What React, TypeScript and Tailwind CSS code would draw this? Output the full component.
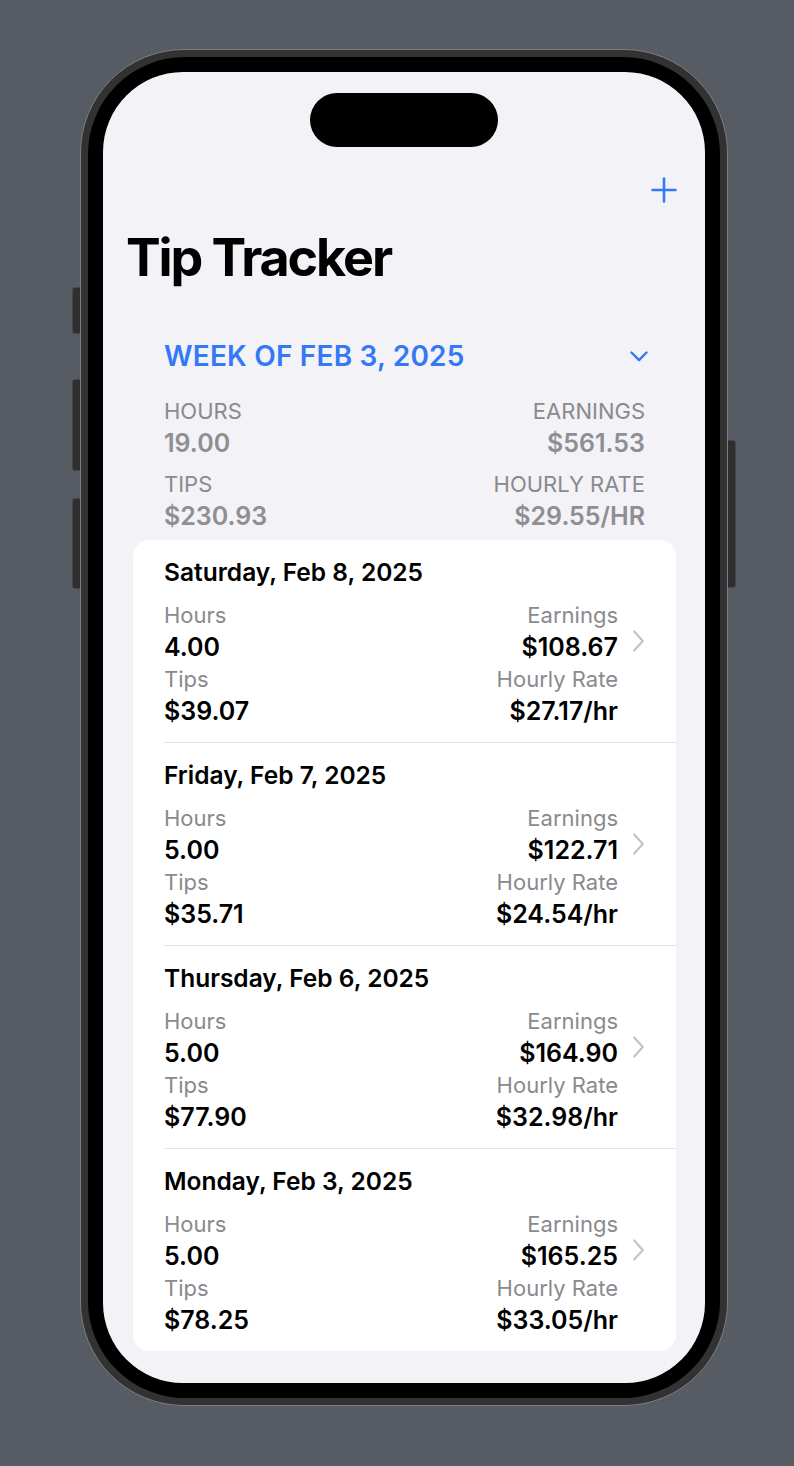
import React from 'react';

const shifts = [
    { date: "Saturday, Feb 8, 2025", hours: "4.00", earnings: "$108.67", tips: "$39.07", rate: "$27.17/hr" },
    { date: "Friday, Feb 7, 2025", hours: "5.00", earnings: "$122.71", tips: "$35.71", rate: "$24.54/hr" },
    { date: "Thursday, Feb 6, 2025", hours: "5.00", earnings: "$164.90", tips: "$77.90", rate: "$32.98/hr" },
    { date: "Monday, Feb 3, 2025", hours: "5.00", earnings: "$165.25", tips: "$78.25", rate: "$33.05/hr" },
];

function ShiftRow({ s, last }: { s: typeof shifts[number]; last: boolean }) {
    return (
        <div className="pl-[31px]">
            <div className={`flex items-center pr-[32px] ${last ? '' : 'border-b border-[#e2e2e7]'}`}>
                <div className="flex-1 pt-[16px] pb-[15px]">
                    <div className="text-[24.5px] leading-[32px] font-semibold text-black">{s.date}</div>
                    <div className="mt-[11px] grid grid-cols-2">
                        <div className="text-[22px] leading-[32px] text-[#8a8a8e]">Hours</div>
                        <div className="text-[22px] leading-[32px] text-[#8a8a8e] text-right">Earnings</div>
                        <div className="text-[25px] leading-[32px] font-semibold text-black">{s.hours}</div>
                        <div className="text-[25px] leading-[32px] font-semibold text-black text-right">{s.earnings}</div>
                        <div className="text-[22px] leading-[32px] text-[#8a8a8e]">Tips</div>
                        <div className="text-[22px] leading-[32px] text-[#8a8a8e] text-right">Hourly Rate</div>
                        <div className="text-[25px] leading-[32px] font-semibold text-black">{s.tips}</div>
                        <div className="text-[25px] leading-[32px] font-semibold text-black text-right">{s.rate}</div>
                    </div>
                </div>
                <svg className="ml-[15px] w-[11px] h-[22px]" viewBox="0 0 11 22" fill="none">
                    <path d="M1.2 1.5 L9.8 11 L1.2 20.5" stroke="#c4c4c7" strokeWidth="2.2" strokeLinecap="round" strokeLinejoin="round" />
                </svg>
            </div>
        </div>
    );
}

export default function App() {
    return (
        <div className="w-[794px] h-[1466px] bg-[#575c64] pt-[49px] pl-[80px]" style={{ fontFamily: 'Inter, "Liberation Sans", sans-serif' }}>
            <div className="relative w-[648px] h-[1357px]">
                {/* hardware buttons */}
                <div className="absolute left-[-8px] top-[238px] w-[9px] h-[47px] rounded-l-[3px] bg-[#2f2f30] border border-[#45474b]" />
                <div className="absolute left-[-8px] top-[330px] w-[9px] h-[92px] rounded-l-[3px] bg-[#2f2f30] border border-[#45474b]" />
                <div className="absolute left-[-8px] top-[449px] w-[9px] h-[91px] rounded-l-[3px] bg-[#2f2f30] border border-[#45474b]" />
                <div className="absolute right-[-8px] top-[391px] w-[9px] h-[148px] rounded-r-[3px] bg-[#2f2f30] border border-[#45474b]" />

                <div className="relative w-full h-full rounded-[104px] bg-[#323233] border border-[#7c7e82] p-[7px]">
                    <div className="w-full h-full rounded-[97px] bg-black p-[15px]">
                        <div className="w-full h-full rounded-[80px] bg-[#f2f2f7] overflow-hidden pt-[21px]">
                            <div className="mx-auto w-[188px] h-[54px] rounded-full bg-black" />

                            <div className="h-[80px] flex justify-end items-start pt-[30px] pr-[28px]">
                                <svg className="w-[26px] h-[26px]" viewBox="0 0 26 26" fill="none">
                                    <path d="M13 1.5 V24.5 M1.5 13 H24.5" stroke="#3478f6" strokeWidth="2.6" strokeLinecap="round" />
                                </svg>
                            </div>

                            <h1 className="pl-[23px] h-[62px] text-[52px] leading-[62px] font-bold tracking-[-2.1px] text-black">Tip Tracker</h1>

                            {/* week summary */}
                            <div className="mt-[51px] pl-[61px] pr-[60px]">
                                <div className="flex items-center justify-between">
                                    <span className="text-[28px] leading-[32px] font-semibold tracking-[0.2px] text-[#3478f6]">WEEK OF FEB 3, 2025</span>
                                    <svg className="w-[18px] h-[11px] -mr-[3px]" viewBox="0 0 18 11" fill="none">
                                        <path d="M1.5 1.5 L9 9.2 L16.5 1.5" stroke="#3478f6" strokeWidth="2.4" strokeLinecap="round" strokeLinejoin="round" />
                                    </svg>
                                </div>
                                <div className="mt-[23px] grid grid-cols-2">
                                    <div className="text-[22px] leading-[32px] text-[#8a8a8e]">HOURS</div>
                                    <div className="text-[22px] leading-[32px] text-[#8a8a8e] text-right">EARNINGS</div>
                                    <div className="text-[25px] leading-[32px] font-semibold text-[#8e8e93]">19.00</div>
                                    <div className="text-[25px] leading-[32px] font-semibold text-[#8e8e93] text-right">$561.53</div>
                                    <div className="mt-[9px] text-[22px] leading-[32px] text-[#8a8a8e]">TIPS</div>
                                    <div className="mt-[9px] text-[22px] leading-[32px] text-[#8a8a8e] text-right">HOURLY RATE</div>
                                    <div className="text-[25px] leading-[32px] font-semibold text-[#8e8e93]">$230.93</div>
                                    <div className="text-[25px] leading-[32px] font-semibold text-[#8e8e93] text-right">$29.55/HR</div>
                                </div>
                            </div>

                            {/* shifts */}
                            <div className="mt-[8px] ml-[30px] mr-[29px] bg-white rounded-[16px]">
                                {shifts.map((s, i) => (
                                    <ShiftRow key={i} s={s} last={i === shifts.length - 1} />
                                ))}
                            </div>
                        </div>
                    </div>
                </div>
            </div>
        </div>
    );
}
